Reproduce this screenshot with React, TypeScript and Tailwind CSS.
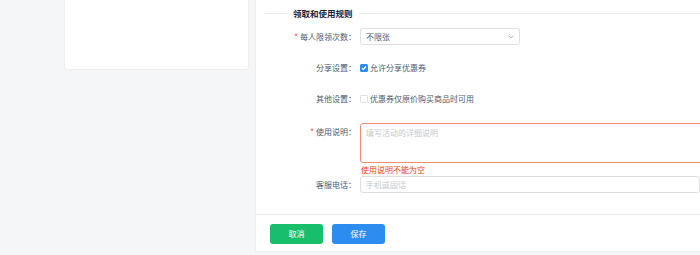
import React from "react";
import { ChevronDown } from "lucide-react";

const font = { fontFamily: '"Noto Sans CJK SC", "Noto Sans", sans-serif' };

function Label({ text, required }: { text: string; required?: boolean }) {
  return (
    <div className="w-[104px] shrink-0 h-[17px] flex items-center justify-end pr-[4px] text-[8px] text-[#515a6e]">
      {required && <span className="text-[#ed4014] mr-[2px] text-[8px] leading-none">*</span>}
      <span>{text}：</span>
    </div>
  );
}

function App() {
  return (
    <div className="w-[700px] h-[255px] bg-[#f5f6f8] flex overflow-hidden" style={font}>
      <div className="w-[255px] shrink-0 pl-[64px] pr-[6px]">
        <div className="h-[70px] bg-white rounded-b-[3px] border border-t-0 border-[#eceef2]"></div>
      </div>

      <div className="flex-1 h-[252px] bg-white border-l border-b border-[#eceef0] flex flex-col overflow-hidden">
        <div className="pt-[7px] flex-1">
          <div className="h-[13px] flex items-center pl-[9px]">
            <div className="w-[22px] h-px bg-[#e8eaec]"></div>
            <span className="px-[6px] text-[8.5px] font-semibold text-[#17233d] whitespace-nowrap">领取和使用规则</span>
            <div className="flex-1 h-px bg-[#e8eaec]"></div>
          </div>

          <div className="mt-[8px] flex">
            <Label text="每人限领次数" required />
            <div className="w-[160px] h-[17px] border border-[#dcdee2] rounded-[3px] flex items-center justify-between pl-[5px] pr-[4px] text-[8px] text-[#515a6e]">
              <span>不限张</span>
              <ChevronDown size={8} color="#8a8f99" strokeWidth={2} />
            </div>
          </div>

          <div className="mt-[14px] flex">
            <Label text="分享设置" />
            <div className="h-[17px] flex items-center text-[8px] text-[#515a6e]">
              <span className="w-[8px] h-[8px] rounded-[1.5px] bg-[#2d8cf0] flex items-center justify-center mr-[2px]">
                <svg width="6" height="6" viewBox="0 0 6 6">
                  <path d="M1 3.2 L2.4 4.5 L5 1.5" stroke="#fff" strokeWidth="1.2" fill="none" />
                </svg>
              </span>
              <span>允许分享优惠券</span>
            </div>
          </div>

          <div className="mt-[14px] flex">
            <Label text="其他设置" />
            <div className="h-[17px] flex items-center text-[8px] text-[#515a6e]">
              <span className="w-[8px] h-[8px] rounded-[1.5px] border border-[#dcdee2] bg-white mr-[2px]"></span>
              <span>优惠券仅原价购买商品时可用</span>
            </div>
          </div>

          <div className="mt-[16px] flex">
            <Label text="使用说明" required />
            <div>
              <div className="w-[400px] h-[40px] border border-[#f08d72] rounded-[3px] px-[5px] pt-[3px] text-[8px] text-[#c5c8ce]">
                填写活动的详细说明
              </div>
              <div className="h-[13px] flex items-center pl-[1px] text-[8px] text-[#ed4014]">使用说明不能为空</div>
            </div>
          </div>

          <div className="flex">
            <Label text="客服电话" />
            <div className="w-[400px] h-[17px] border border-[#dcdee2] rounded-[3px] flex items-center px-[5px] text-[8px] text-[#c5c8ce]">
              手机或固话
            </div>
          </div>
        </div>

        <div className="h-[37px] border-t border-[#e8eaec] flex items-start gap-[9px] pl-[14px] pt-[9px]">
          <button className="w-[53px] h-[20px] rounded-[3px] bg-[#19be6b] text-white text-[8px]">取消</button>
          <button className="w-[53px] h-[20px] rounded-[3px] bg-[#2d8cf0] text-white text-[8px]">保存</button>
        </div>
      </div>
    </div>
  );
}

export default App;
